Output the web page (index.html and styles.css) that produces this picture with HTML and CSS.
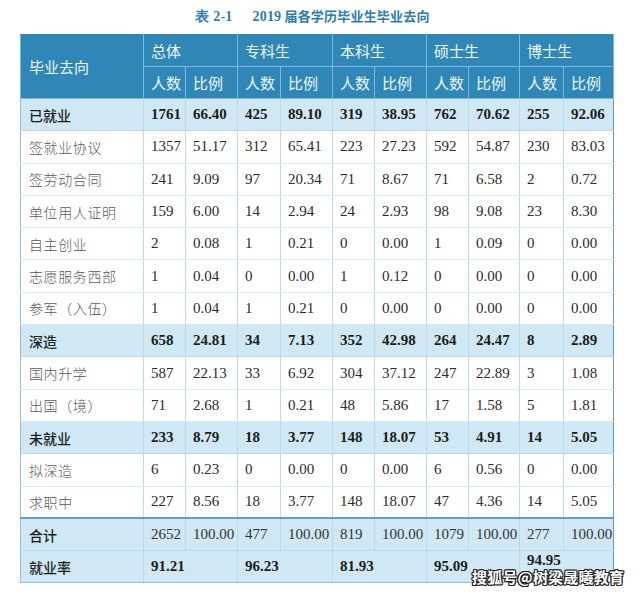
FILE: index.html
```html
<!DOCTYPE html>
<html lang="zh">
<head>
<meta charset="utf-8">
<title>2019届各学历毕业生毕业去向</title>
<link rel="stylesheet" href="styles.css">
</head>
<body>
<div class="page">
  <div class="title"><span class="t-num">表 2-1</span><span class="t-gap"></span><span class="t-num">2019</span> 届各学历毕业生毕业去向</div>
  <table class="grid">
    <colgroup>
      <col class="c-label">
      <col class="c-n"><col class="c-p">
      <col class="c-n2"><col class="c-p">
      <col class="c-n"><col class="c-p">
      <col class="c-n"><col class="c-p3">
      <col class="c-n4"><col class="c-p4">
    </colgroup>
    <thead>
      <tr class="h1">
        <th rowspan="2" class="h-label">毕业去向</th>
        <th colspan="2">总体</th>
        <th colspan="2">专科生</th>
        <th colspan="2">本科生</th>
        <th colspan="2">硕士生</th>
        <th colspan="2">博士生</th>
      </tr>
      <tr class="h2">
        <th>人数</th><th>比例</th>
        <th>人数</th><th>比例</th>
        <th>人数</th><th>比例</th>
        <th>人数</th><th>比例</th>
        <th>人数</th><th>比例</th>
      </tr>
    </thead>
    <tbody>
      <tr class="sum"><td class="lb">已就业</td><td>1761</td><td>66.40</td><td>425</td><td>89.10</td><td>319</td><td>38.95</td><td>762</td><td>70.62</td><td>255</td><td>92.06</td></tr>
      <tr><td class="lb">签就业协议</td><td>1357</td><td>51.17</td><td>312</td><td>65.41</td><td>223</td><td>27.23</td><td>592</td><td>54.87</td><td>230</td><td>83.03</td></tr>
      <tr><td class="lb">签劳动合同</td><td>241</td><td>9.09</td><td>97</td><td>20.34</td><td>71</td><td>8.67</td><td>71</td><td>6.58</td><td>2</td><td>0.72</td></tr>
      <tr><td class="lb">单位用人证明</td><td>159</td><td>6.00</td><td>14</td><td>2.94</td><td>24</td><td>2.93</td><td>98</td><td>9.08</td><td>23</td><td>8.30</td></tr>
      <tr><td class="lb">自主创业</td><td>2</td><td>0.08</td><td>1</td><td>0.21</td><td>0</td><td>0.00</td><td>1</td><td>0.09</td><td>0</td><td>0.00</td></tr>
      <tr><td class="lb">志愿服务西部</td><td>1</td><td>0.04</td><td>0</td><td>0.00</td><td>1</td><td>0.12</td><td>0</td><td>0.00</td><td>0</td><td>0.00</td></tr>
      <tr><td class="lb">参军（入伍）</td><td>1</td><td>0.04</td><td>1</td><td>0.21</td><td>0</td><td>0.00</td><td>0</td><td>0.00</td><td>0</td><td>0.00</td></tr>
      <tr class="sum"><td class="lb">深造</td><td>658</td><td>24.81</td><td>34</td><td>7.13</td><td>352</td><td>42.98</td><td>264</td><td>24.47</td><td>8</td><td>2.89</td></tr>
      <tr><td class="lb">国内升学</td><td>587</td><td>22.13</td><td>33</td><td>6.92</td><td>304</td><td>37.12</td><td>247</td><td>22.89</td><td>3</td><td>1.08</td></tr>
      <tr><td class="lb">出国（境）</td><td>71</td><td>2.68</td><td>1</td><td>0.21</td><td>48</td><td>5.86</td><td>17</td><td>1.58</td><td>5</td><td>1.81</td></tr>
      <tr class="sum"><td class="lb">未就业</td><td>233</td><td>8.79</td><td>18</td><td>3.77</td><td>148</td><td>18.07</td><td>53</td><td>4.91</td><td>14</td><td>5.05</td></tr>
      <tr><td class="lb">拟深造</td><td>6</td><td>0.23</td><td>0</td><td>0.00</td><td>0</td><td>0.00</td><td>6</td><td>0.56</td><td>0</td><td>0.00</td></tr>
      <tr><td class="lb">求职中</td><td>227</td><td>8.56</td><td>18</td><td>3.77</td><td>148</td><td>18.07</td><td>47</td><td>4.36</td><td>14</td><td>5.05</td></tr>
      <tr class="total"><td class="lb">合计</td><td>2652</td><td>100.00</td><td>477</td><td>100.00</td><td>819</td><td>100.00</td><td>1079</td><td>100.00</td><td>277</td><td>100.00</td></tr>
      <tr class="rate"><td class="lb">就业率</td><td colspan="2">91.21</td><td colspan="2">96.23</td><td colspan="2">81.93</td><td colspan="2">95.09</td><td colspan="2"><span class="lift">94.95</span></td></tr>
    </tbody>
  </table>
  <div class="watermark">搜狐号@树梁晟曦教育</div>
</div>
</body>
</html>
```

FILE: styles.css
```css
html, body {
  margin: 0;
  padding: 0;
  background: #ffffff;
}

.page {
  position: relative;
  width: 640px;
  height: 597px;
  overflow: hidden;
  padding: 0 0 0 20px;
  box-sizing: border-box;
}

.title {
  width: 593px;
  height: 34px;
  box-sizing: border-box;
  padding-top: 7px;
  padding-right: 8px;
  text-align: center;
  color: #2a7cb3;
  font-family: "Noto Sans CJK SC", sans-serif;
  font-weight: 700;
  font-size: 13px;
  line-height: 18px;
  letter-spacing: 0.2px;
}

.t-num {
  font-family: "Liberation Serif", serif;
  font-size: 14px;
  font-weight: 700;
}

.t-gap {
  display: inline-block;
  width: 20px;
}

.grid {
  border-collapse: collapse;
  table-layout: fixed;
  width: 593px;
  font-family: "Liberation Serif", serif;
  font-size: 15px;
  color: #2b2b2b;
}

.c-label { width: 123px; }
.c-n { width: 42px; }
.c-n2 { width: 43px; }
.c-p { width: 52px; }
.c-p3 { width: 51px; }
.c-n4 { width: 44px; }
.c-p4 { width: 50px; }

.grid th {
  background: #2f87b8;
  color: #eef6fb;
  font-family: "Noto Sans CJK SC", sans-serif;
  font-weight: 400;
  font-size: 15px;
  text-align: left;
  padding: 0 0 0 7px;
  border: 1px solid #7ab8dc;
  height: 32px;
  box-sizing: border-box;
}

.grid th.h-label {
  padding-left: 8px;
}

.grid thead tr.h1 th {
  border-top-color: #2f87b8;
}

.grid td {
  height: 32.3px;
  box-sizing: border-box;
  padding: 0 0 0 7px;
  border-left: 1px solid #b7daed;
  border-right: 1px solid #b7daed;
  border-top: 1px solid #d6eaf5;
  border-bottom: 1px solid #d6eaf5;
  white-space: nowrap;
  vertical-align: middle;
}

.grid td.lb {
  padding-left: 8px;
  font-family: "Noto Sans CJK SC", sans-serif;
  font-weight: 300;
  font-size: 14px;
  color: #5a5a5a;
  letter-spacing: 0.6px;
  border-left-color: #8fc2de;
}

.grid tr.sum td,
.grid tr.total td,
.grid tr.rate td {
  background: #cfe8f4;
  border-top-color: #b7daed;
  border-bottom-color: #b7daed;
}

.grid tr.sum td {
  font-weight: 700;
  color: #1c1c1c;
}

.grid tr.sum td.lb,
.grid tr.total td.lb,
.grid tr.rate td.lb {
  color: #1e1e1e;
  font-weight: 500;
  letter-spacing: 0;
}

.grid tr.total td {
  border-top: 2px solid #5d9fc7;
  color: #333333;
}

.grid tr.rate td {
  font-weight: 700;
  color: #1c1c1c;
  border-bottom-color: #8fc2de;
}

.grid td:last-child {
  border-right-color: #5d9fc7;
}

.lift {
  position: relative;
  top: -6px;
}

.watermark {
  position: absolute;
  left: 472px;
  top: 568px;
  font-family: "Noto Sans CJK SC", sans-serif;
  font-weight: 700;
  font-size: 15px;
  line-height: 18px;
  letter-spacing: 0.2px;
  color: #ffffff;
  text-shadow:
    1px 0 0 #222, -1px 0 0 #222, 0 1px 0 #222, 0 -1px 0 #222,
    1px 1px 0 #222, -1px -1px 0 #222, 1px -1px 0 #222, -1px 1px 0 #222;
}
```
